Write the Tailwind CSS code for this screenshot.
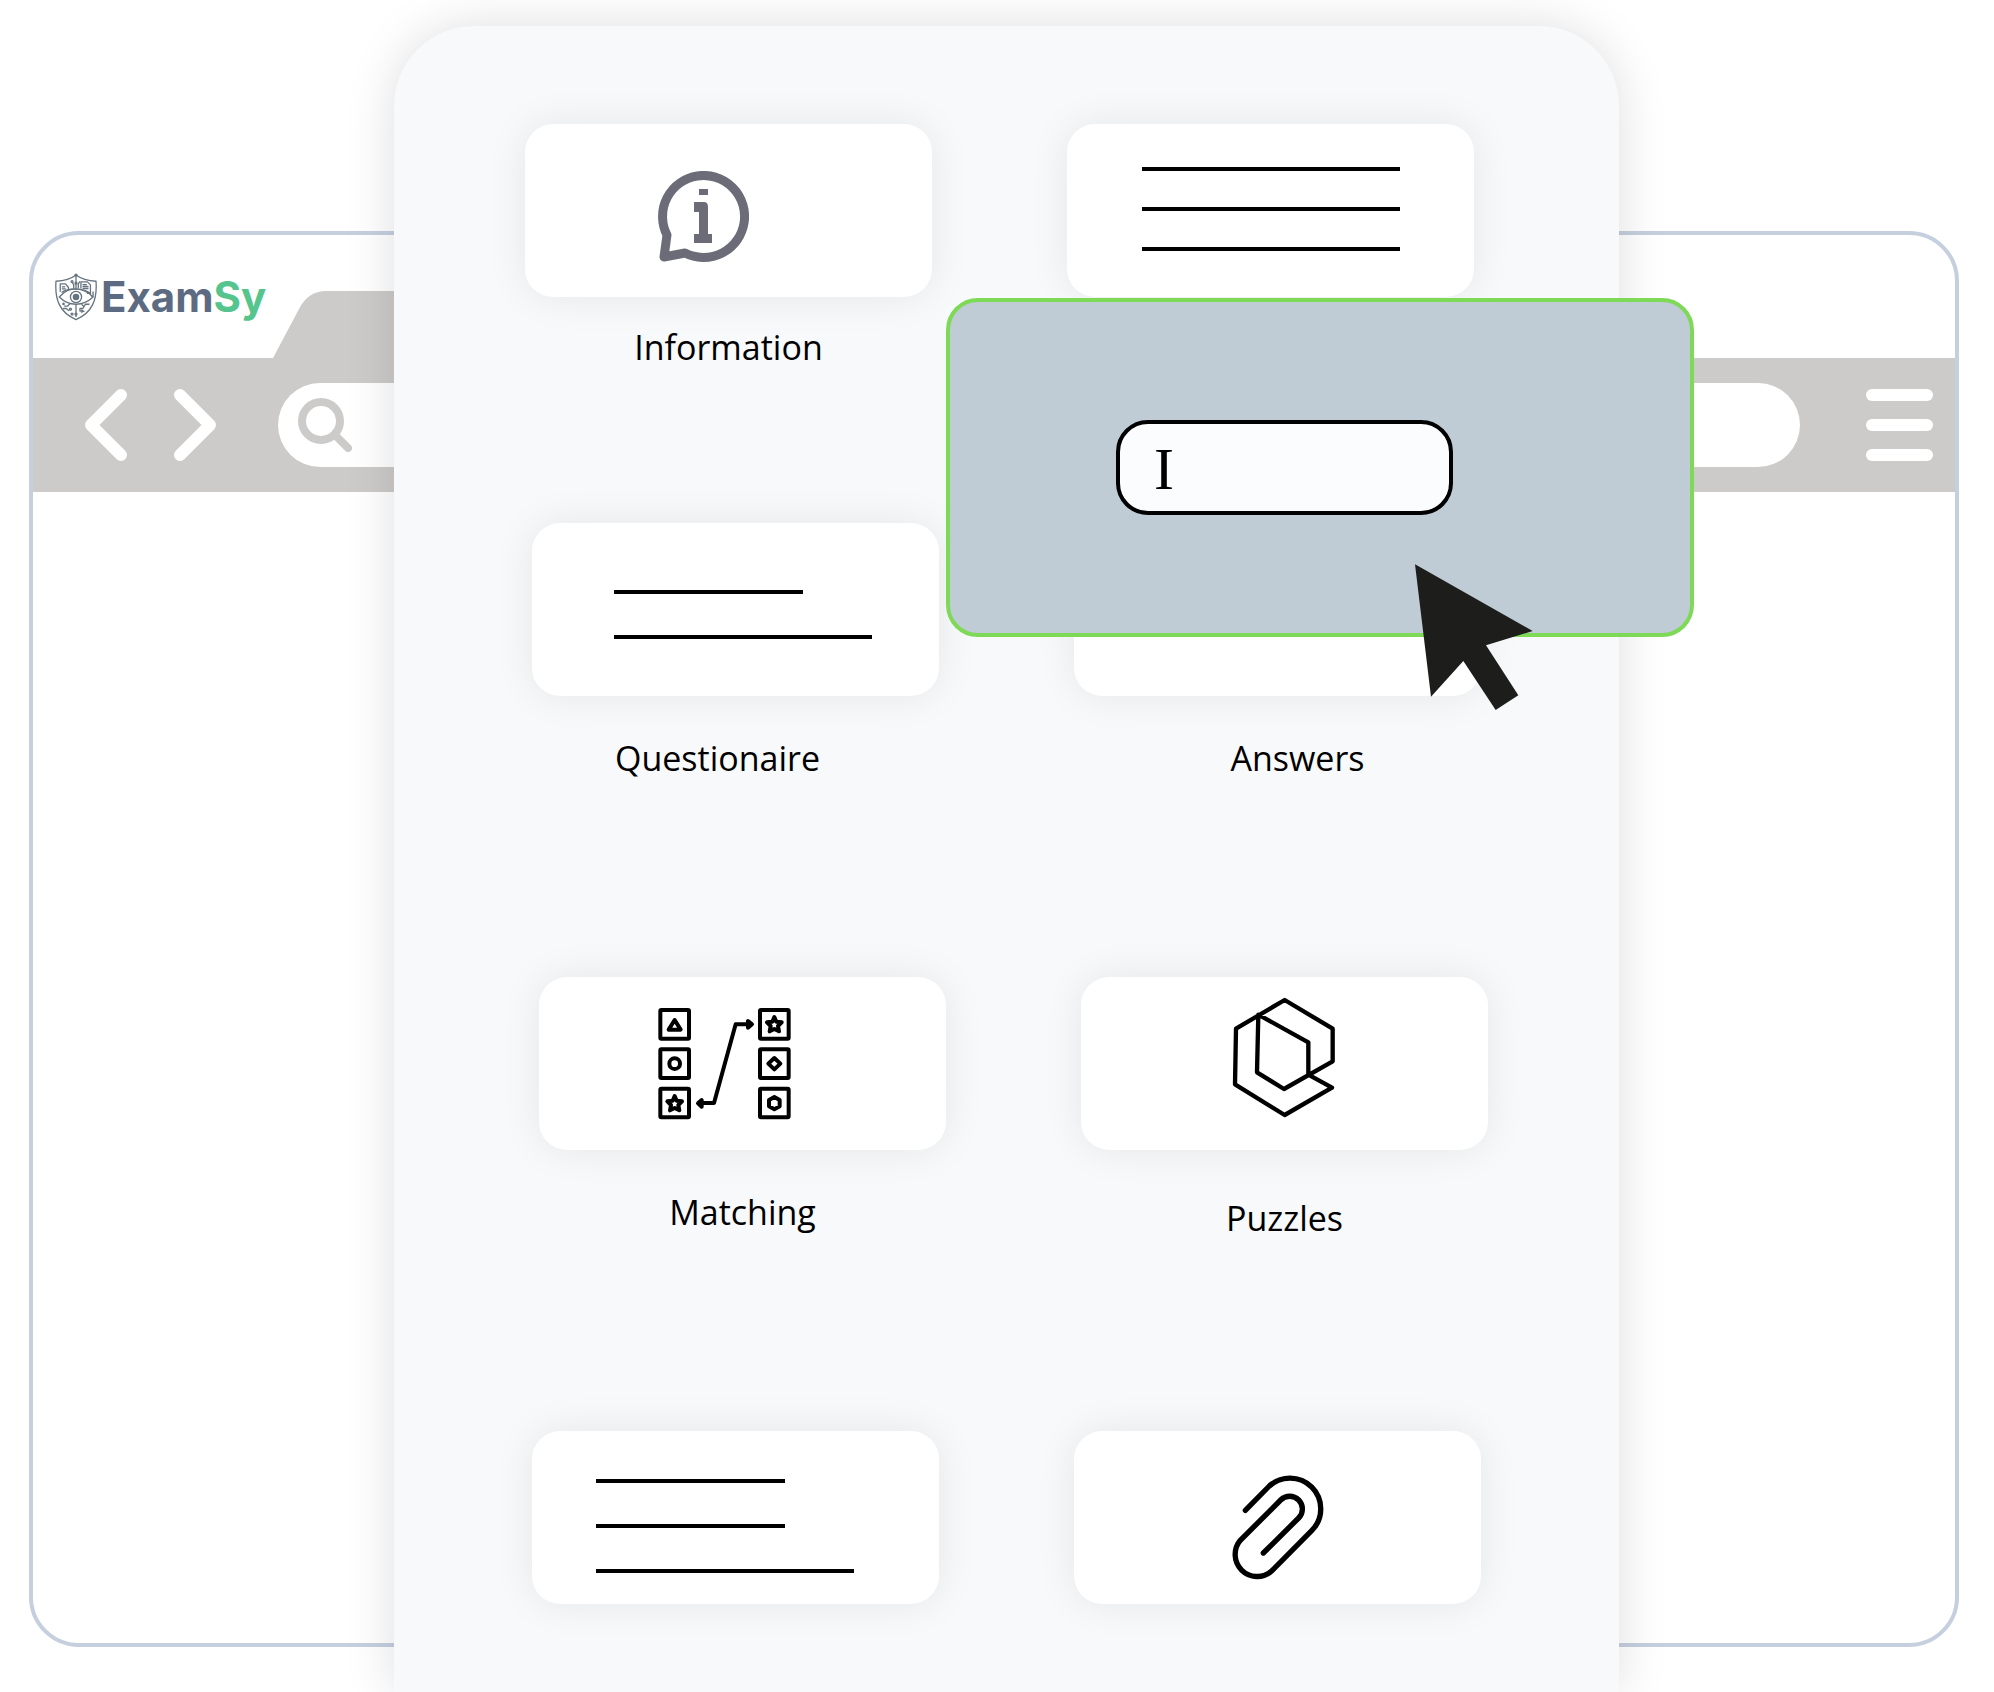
<!DOCTYPE html>
<html lang="en">
  <head>
    <meta charset="UTF-8" />
    <meta name="viewport" content="width=device-width, initial-scale=1.0" />
    <title>ExamSy</title>
    <script src="https://cdn.jsdelivr.net/npm/@tailwindcss/browser@4"></script>
  </head>
  <body class="bg-white text-black font-['Open_Sans',sans-serif]">
    <div class="relative h-screen overflow-hidden flex flex-col pt-[231px] pb-[45px] pl-[29px] pr-[35px]">
      <!-- Browser window -->
      <div class="flex-1 flex flex-col border-4 border-[#c5cfde] rounded-[50px] overflow-hidden">
        <header class="flex items-end h-[123px]">
          <a href="#" class="flex items-center gap-1 w-[240px] pl-[22px] mb-[37px]">
            <svg class="w-[42px] h-[48px] shrink-0" viewBox="105 158 128 144" fill="none" stroke="#66747f" stroke-width="4" stroke-linejoin="round">
              <path d="M169 163C155 174 131 181 108 182C104 238 119 277 169 299C219 277 234 238 230 182C208 181 184 174 169 163Z" />
              <circle cx="169" cy="163" r="3" fill="#66747f" />
              <path d="M169 165V205M157 185L162 192V203M181 182L176 190V203" />
              <circle cx="157" cy="183" r="3" />
              <circle cx="169" cy="188" r="3" />
              <path d="M121 214V190H137L146 201V207M126 199H136M126 205H138M184 204V184H204L213 193V219H202M189 192H202M189 198H207M189 204H207M221 213V228H216" />
              <path d="M118 230C137 209 151 206 169 206C189 206 205 213 221 230C204 246 189 252 169 252C150 252 134 246 118 230Z" />
              <path d="M125 216C143 202 193 199 214 221" />
              <circle cx="169" cy="230" r="17" />
              <circle cx="169" cy="230" r="8" fill="#66747f" />
              <path d="M169 252V291M151 250L143 258H133M129 265H139L148 272M186 252L193 259M181 274V265H190L198 252H210M187 274H195" />
              <circle cx="152" cy="267" r="3" />
              <circle cx="157" cy="282" r="3" />
              <circle cx="169" cy="282" r="3" />
              <circle cx="187" cy="273" r="3" />
              <circle cx="131" cy="251" r="2" />
            </svg>
            <span class="text-[42px] leading-[48px] font-bold text-[#5d6b82] font-['Inter',sans-serif]">Exam<span class="text-[#55c58d]">Sy</span></span>
          </a>
          <svg class="w-[500px] h-[67px] shrink-0" viewBox="0 0 500 67" fill="#cccbc9">
            <path d="M0 67L26 18Q35 0 53 0H447Q465 0 474 18L500 67Z" />
          </svg>
        </header>
        <nav class="flex items-center h-[134px] bg-[#cccbc9] pl-[52px] pr-[22px] shrink-0">
          <button type="button" aria-label="Back">
            <svg class="w-[42px] h-[72px]" viewBox="0 0 42 72" fill="none" stroke="white" stroke-width="12" stroke-linecap="round" stroke-linejoin="round">
              <path d="M36 6L6 36L36 66" />
            </svg>
          </button>
          <button type="button" aria-label="Forward" class="ml-[47px]">
            <svg class="w-[42px] h-[72px]" viewBox="0 0 42 72" fill="none" stroke="white" stroke-width="12" stroke-linecap="round" stroke-linejoin="round">
              <path d="M6 6L36 36L6 66" />
            </svg>
          </button>
          <label class="flex-1 flex items-center gap-4 h-[84px] ml-[62px] mr-[66px] pl-5 bg-white rounded-full">
            <svg class="w-[54px] h-[54px] shrink-0" viewBox="0 0 54 54" fill="none" stroke="#cccbc9" stroke-width="8" stroke-linecap="round">
              <circle cx="23" cy="23" r="19" />
              <path d="M37 37L50 50" />
            </svg>
            <input type="text" aria-label="Search" class="flex-1 text-3xl outline-none" />
          </label>
          <button type="button" aria-label="Menu" class="flex flex-col gap-[18px] w-[67px]">
            <span class="h-3 w-full rounded-full bg-white"></span>
            <span class="h-3 w-full rounded-full bg-white"></span>
            <span class="h-3 w-full rounded-full bg-white"></span>
          </button>
        </nav>
      </div>

      <!-- Block picker -->
      <main class="absolute top-[26px] bottom-0 left-[394px] right-[375px] bg-[#f8f9fb] rounded-t-[80px] shadow-[0_0_50px_rgba(0,0,0,0.13)] pt-[98px] text-[34px] leading-[40px] text-center">
        <section class="flex gap-[135px] pl-[131px] h-[399px]">
          <div class="w-[407px]">
            <div class="h-[173px] bg-white rounded-[28px] shadow-[0_0_40px_rgba(0,0,0,0.08)] pl-[133px] pt-[47px]">
              <svg class="w-[91px] h-[91px]" viewBox="0 0 91 91" fill="none" stroke="#6b6c78" stroke-width="9" stroke-linejoin="round">
                <path d="M9 64A41 41 0 1 1 27 82L6 86Z" />
                <path d="M41 18H50V24H41ZM36 31H46Q50 31 50 36V63H54V72H36V63H41V41H36Z" fill="#6b6c78" stroke="none" />
              </svg>
            </div>
            <p class="mt-[30px]">Information</p>
          </div>
          <div class="w-[407px]">
            <div class="flex flex-col gap-9 h-[173px] bg-white rounded-[28px] shadow-[0_0_40px_rgba(0,0,0,0.08)] pl-[75px] pt-[43px]">
              <div class="h-1 w-[258px] bg-black"></div>
              <div class="h-1 w-[258px] bg-black"></div>
              <div class="h-1 w-[258px] bg-black"></div>
            </div>
          </div>
        </section>

        <section class="flex gap-[135px] pl-[138px] h-[454px]">
          <div class="w-[407px]">
            <div class="flex flex-col gap-[41px] h-[173px] bg-white rounded-[28px] shadow-[0_0_40px_rgba(0,0,0,0.08)] pl-[82px] pt-[67px]">
              <div class="h-1 w-[189px] bg-black"></div>
              <div class="h-1 w-[258px] bg-black"></div>
            </div>
            <p class="mt-[42px] pr-9">Questionaire</p>
          </div>
          <div class="w-[407px]">
            <div class="h-[173px] bg-white rounded-[28px] shadow-[0_0_40px_rgba(0,0,0,0.08)]"></div>
            <p class="mt-[42px] pl-10">Answers</p>
          </div>
        </section>

        <section class="flex gap-[135px] pl-[145px] h-[454px]">
          <div class="w-[407px]">
            <div class="h-[173px] bg-white rounded-[28px] shadow-[0_0_40px_rgba(0,0,0,0.08)] pl-[117px] pt-[29px]">
              <svg class="w-[137px] h-[114px]" viewBox="108 78 411 342" fill="none" stroke="black" stroke-width="12" stroke-linejoin="round">
                <rect x="121" y="90" width="86" height="86" rx="3" />
                <rect x="121" y="208" width="86" height="86" rx="3" />
                <rect x="121" y="326" width="86" height="86" rx="3" />
                <rect x="420" y="90" width="86" height="86" rx="3" />
                <rect x="420" y="208" width="86" height="86" rx="3" />
                <rect x="420" y="326" width="86" height="86" rx="3" />
                <path d="M164 120L182 149H146Z" />
                <circle cx="164" cy="251" r="16" />
                <path d="M164 348L170 362L186 364L175 375L178 391L164 384L150 391L153 375L142 364L158 362Z" />
                <path d="M463 111L469 125L485 127L474 138L477 154L463 147L449 154L452 138L441 127L457 125Z" />
                <path d="M463 234L481 251L463 268L445 251Z" />
                <path d="M463 351L479 360V379L463 388L447 379V360Z" />
                <path d="M244 369H282L347 133H384" />
                <path d="M234 370L245 360V380ZM396 133L384 123V143Z" fill="black" />
              </svg>
            </div>
            <p class="mt-[42px]">Matching</p>
          </div>
          <div class="w-[407px]">
            <div class="h-[173px] bg-white rounded-[28px] shadow-[0_0_40px_rgba(0,0,0,0.08)] pl-[151px] pt-5">
              <svg class="w-[103px] h-[121px]" viewBox="96 51 309 363" fill="none" stroke="black" stroke-width="13" stroke-linecap="round" stroke-linejoin="round">
                <path d="M325 284L396 323L254 405L105 313L108 146L254 60L398 146V244L252 327L171 277L175 104L325 187V284" />
              </svg>
            </div>
            <p class="mt-12">Puzzles</p>
          </div>
        </section>

        <section class="flex gap-[135px] pl-[138px]">
          <div class="w-[407px]">
            <div class="flex flex-col gap-[41px] h-[173px] bg-white rounded-[28px] shadow-[0_0_40px_rgba(0,0,0,0.08)] pl-[64px] pt-12">
              <div class="h-1 w-[189px] bg-black"></div>
              <div class="h-1 w-[189px] bg-black"></div>
              <div class="h-1 w-[258px] bg-black"></div>
            </div>
          </div>
          <div class="w-[407px]">
            <div class="h-[173px] bg-white rounded-[28px] shadow-[0_0_40px_rgba(0,0,0,0.08)] pl-[156px] pt-[43px]">
              <svg class="w-[94px] h-[107px]" viewBox="93 72 282 321" fill="none" stroke="black" stroke-width="16" stroke-linecap="round">
                <path d="M139 181L208 111A91 91 0 0 1 338 242L217 364A66 66 0 0 1 124 271L245 150A38 38 0 0 1 299 204L193 309" />
              </svg>
            </div>
          </div>
        </section>
      </main>

      <!-- Answer block being dragged -->
      <div class="absolute top-[298px] left-[946px] w-[748px] h-[339px] bg-[#bfccd5] border-4 border-[#7ed957] rounded-[32px] pl-[166px] pt-[118px]">
        <input
          type="text"
          value="I"
          aria-label="Answer"
          class="block w-[337px] h-[95px] pl-[34px] pt-1 bg-[#fbfcfe] border-4 border-black rounded-[32px] text-[60px] outline-none font-['Liberation_Serif',serif]"
        />
        <svg class="absolute top-[262px] left-[465px] w-[118px] h-[147px]" viewBox="105 72 354 441" fill="#1d1d1b">
          <path d="M105 73L458 273L318 316L415 466L347 510L250 363L153 470Z" />
        </svg>
      </div>
    </div>
  </body>
</html>
